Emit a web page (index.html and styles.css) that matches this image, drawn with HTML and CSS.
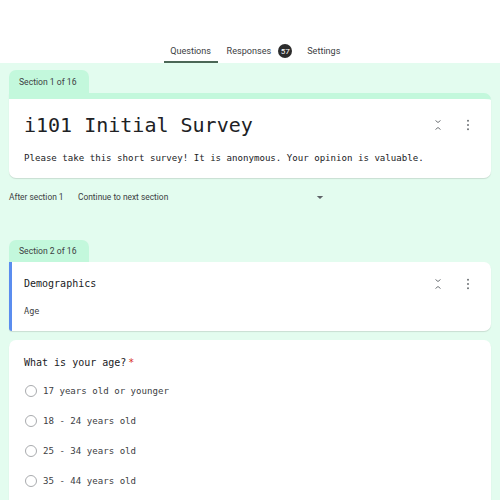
FILE: index.html
```html
<!DOCTYPE html>
<html>
<head>
<meta charset="utf-8">
<link rel="stylesheet" href="styles.css">
</head>
<body>
<header class="top">
  <nav class="tabs">
    <div class="tab active">Questions</div>
    <div class="tab">Responses <span class="badge">57</span></div>
    <div class="tab">Settings</div>
  </nav>
</header>
<main class="main">
  <div class="sec-tab">Section 1 of 16</div>
  <section class="card card-first">
    <div class="head-row">
      <h1 class="title">i101 Initial Survey</h1>
      <div class="icons">
        <svg class="ic" viewBox="0 0 20 20"><path d="M7.5 5.5l2.5 2 2.5-2M7.5 14.5l2.5-2 2.5 2" fill="none" stroke="#6f7377" stroke-width="1"/></svg>
        <svg class="ic" viewBox="0 0 20 20"><circle cx="10" cy="5.8" r="1" fill="#6f7377"/><circle cx="10" cy="10" r="1" fill="#6f7377"/><circle cx="10" cy="14.2" r="1" fill="#6f7377"/></svg>
      </div>
    </div>
    <p class="desc">Please take this short survey! It is anonymous. Your opinion is valuable.</p>
  </section>
  <div class="after">
    <span class="after-label">After section 1</span>
    <div class="select">
      <span>Continue to next section</span>
      <svg class="caret" viewBox="0 0 10 6"><path d="M1 1h8L5 5z" fill="#5f6368"/></svg>
    </div>
  </div>
  <div class="sec-tab sec-tab2">Section 2 of 16</div>
  <section class="card card-sec">
    <div class="head-row">
      <h2 class="sec-title">Demographics</h2>
      <div class="icons">
        <svg class="ic" viewBox="0 0 20 20"><path d="M7.5 5.5l2.5 2 2.5-2M7.5 14.5l2.5-2 2.5 2" fill="none" stroke="#6f7377" stroke-width="1"/></svg>
        <svg class="ic" viewBox="0 0 20 20"><circle cx="10" cy="5.8" r="1" fill="#6f7377"/><circle cx="10" cy="10" r="1" fill="#6f7377"/><circle cx="10" cy="14.2" r="1" fill="#6f7377"/></svg>
      </div>
    </div>
    <p class="sec-desc">Age</p>
  </section>
  <section class="card card-q">
    <h3 class="q-title">What is your age?<span class="req">*</span></h3>
    <ul class="options">
      <li class="opt"><span class="radio"></span>17 years old or younger</li>
      <li class="opt"><span class="radio"></span>18 - 24 years old</li>
      <li class="opt"><span class="radio"></span>25 - 34 years old</li>
      <li class="opt"><span class="radio"></span>35 - 44 years old</li>
    </ul>
  </section>
</main>
</body>
</html>
```
FILE: styles.css
```css
html, body { margin: 0; padding: 0; }
body {
  background: #e3fcef;
  font-family: Roboto, "Noto Sans", sans-serif;
  color: #202124;
  height: 500px;
  overflow: hidden;
}
.top {
  background: #fff;
  height: 63px;
  display: flex;
  align-items: flex-end;
  justify-content: center;
}
.tabs {
  display: flex;
  margin-left: 16px;
}
.tab {
  font-size: 9.1px;
  color: #3c4043;
  height: 22px;
  display: flex;
  align-items: center;
  padding: 0;
  margin-right: 12px;
  box-sizing: border-box;
  border-bottom: 2px solid transparent;
}
.tab.active {
  border-bottom-color: #4b6756;
  width: 54px;
  justify-content: center;
  margin-right: 9px;
}
.badge {
  display: inline-flex;
  width: 14px;
  height: 14px;
  border-radius: 50%;
  background: #2c2c2c;
  color: #fff;
  font-size: 8px;
  align-items: center;
  justify-content: center;
  margin-left: 7px;
  margin-right: 3px;
}
.main {
  padding: 7px 9px 0;
}
.sec-tab {
  width: 80px;
  height: 23px;
  background: #c3f8dc;
  border-radius: 7px 7px 0 0;
  font-size: 8.6px;
  color: #3c4043;
  display: flex;
  align-items: center;
  padding-left: 10px;
  box-sizing: border-box;
}
.sec-tab2 { height: 22px; }
.card {
  background: #fff;
  border-radius: 0 7px 7px 7px;
  box-shadow: 0 1px 1px rgba(0,0,0,0.12);
  padding: 0 13px 0 15px;
  box-sizing: border-box;
}
.card-first {
  border-top: 6px solid #c3f8dc;
  padding-top: 14px;
  padding-bottom: 14px;
  height: 85px;
}
.head-row {
  display: flex;
  justify-content: space-between;
  align-items: center;
}
.title {
  margin: 0;
  font-family: "DejaVu Sans Mono", monospace;
  font-weight: normal;
  font-size: 20px;
  line-height: 24px;
  color: #202124;
}
.icons {
  display: flex;
  gap: 10px;
}
.ic { width: 20px; height: 20px; display: block; }
.desc {
  margin: 15px 0 0;
  font-family: "DejaVu Sans Mono", monospace;
  font-size: 9.1px;
  line-height: 12px;
  color: #202124;
}
.after {
  height: 62px;
  display: flex;
  align-items: flex-start;
  padding-top: 14px;
  font-size: 8.4px;
  line-height: 10px;
  color: #3c4043;
  box-sizing: border-box;
}
.after-label { width: 69px; }
.select {
  width: 246px;
  display: flex;
  justify-content: space-between;
  align-items: center;
}
.caret { width: 8px; height: 5px; display: block; }
.card-sec {
  border-left: 3px solid #5b8def;
  padding-left: 12px;
  height: 69px;
  padding-top: 12px;
  border-radius: 0 7px 7px 3px;
}
.sec-title {
  margin: 0;
  font-family: "DejaVu Sans Mono", monospace;
  font-weight: normal;
  font-size: 10px;
  line-height: 16px;
  color: #202124;
}
.sec-desc {
  margin: 11px 0 0;
  font-family: "DejaVu Sans Mono", monospace;
  font-size: 8.6px;
  line-height: 12px;
  color: #3c4043;
}
.card-q {
  margin-top: 9px;
  border-radius: 7px;
  padding-top: 16px;
  height: 200px;
}
.q-title {
  margin: 0;
  font-family: "DejaVu Sans Mono", monospace;
  font-weight: normal;
  font-size: 10px;
  line-height: 14px;
  color: #202124;
}
.req { color: #d93025; margin-left: 2px; }
.options {
  list-style: none;
  margin: 6px 0 0;
  padding: 0;
}
.opt {
  display: flex;
  align-items: center;
  height: 30px;
  font-family: "DejaVu Sans Mono", monospace;
  font-size: 9.1px;
  color: #3c4043;
}
.radio {
  width: 10px;
  height: 10px;
  border: 1.5px solid #a9abae;
  border-radius: 50%;
  margin-left: 1px;
  margin-right: 6px;
  flex: none;
}
```
